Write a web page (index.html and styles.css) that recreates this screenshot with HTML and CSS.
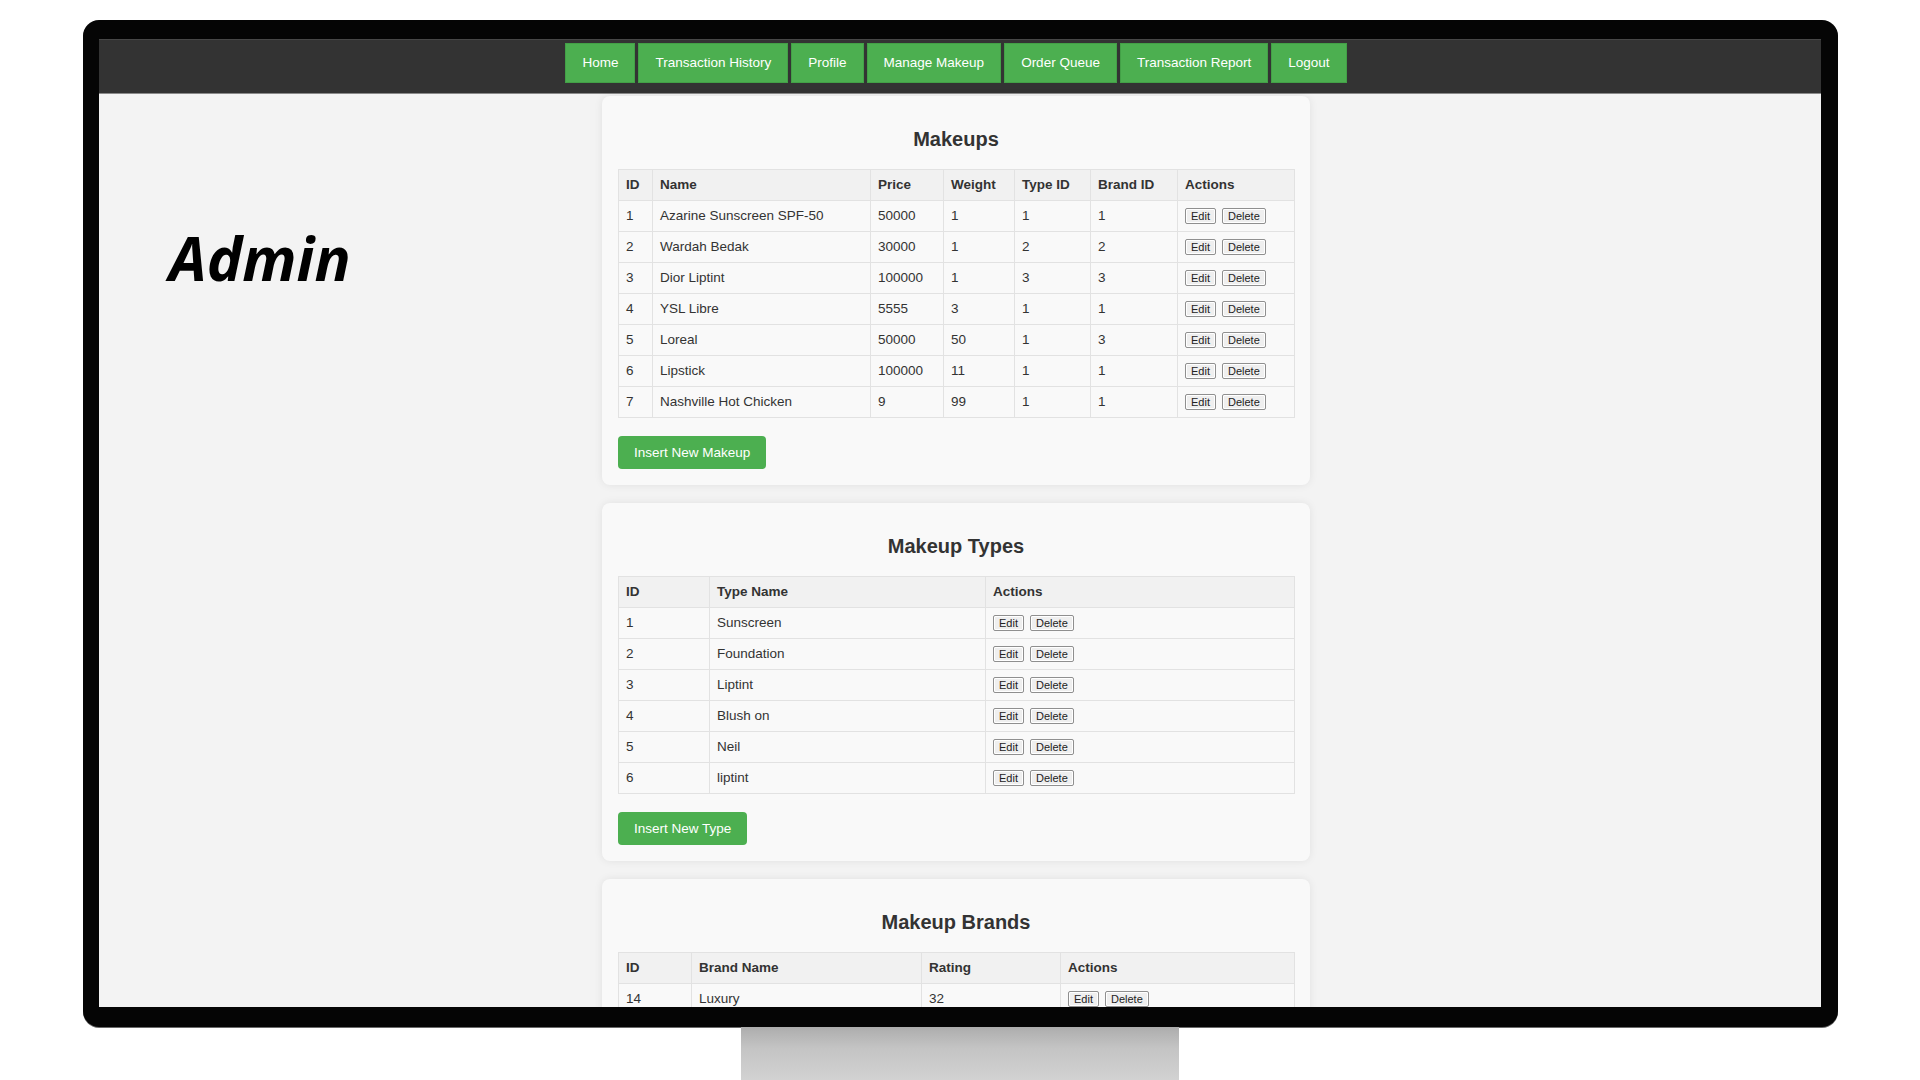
FILE: index.html
```html
<!DOCTYPE html>
<html>
<head>
<meta charset="utf-8">
<link rel="stylesheet" href="styles.css">
</head>
<body>
<div class="monitor">
  <div class="screen">
    <nav class="nav">
      <a class="nav-btn">Home</a>
      <a class="nav-btn">Transaction History</a>
      <a class="nav-btn">Profile</a>
      <a class="nav-btn">Manage Makeup</a>
      <a class="nav-btn">Order Queue</a>
      <a class="nav-btn">Transaction Report</a>
      <a class="nav-btn">Logout</a>
    </nav>
    <main class="main">
      <section class="card">
        <h2 class="card-title">Makeups</h2>
        <table class="tbl">
          <colgroup><col class="m1"><col class="m2"><col class="m3"><col class="m4"><col class="m5"><col class="m6"><col class="m7"></colgroup>
          <thead><tr><th>ID</th><th>Name</th><th>Price</th><th>Weight</th><th>Type ID</th><th>Brand ID</th><th>Actions</th></tr></thead>
          <tbody>
            <tr><td>1</td><td>Azarine Sunscreen SPF-50</td><td>50000</td><td>1</td><td>1</td><td>1</td><td><button class="sm">Edit</button><button class="sm">Delete</button></td></tr>
            <tr><td>2</td><td>Wardah Bedak</td><td>30000</td><td>1</td><td>2</td><td>2</td><td><button class="sm">Edit</button><button class="sm">Delete</button></td></tr>
            <tr><td>3</td><td>Dior Liptint</td><td>100000</td><td>1</td><td>3</td><td>3</td><td><button class="sm">Edit</button><button class="sm">Delete</button></td></tr>
            <tr><td>4</td><td>YSL Libre</td><td>5555</td><td>3</td><td>1</td><td>1</td><td><button class="sm">Edit</button><button class="sm">Delete</button></td></tr>
            <tr><td>5</td><td>Loreal</td><td>50000</td><td>50</td><td>1</td><td>3</td><td><button class="sm">Edit</button><button class="sm">Delete</button></td></tr>
            <tr><td>6</td><td>Lipstick</td><td>100000</td><td>11</td><td>1</td><td>1</td><td><button class="sm">Edit</button><button class="sm">Delete</button></td></tr>
            <tr><td>7</td><td>Nashville Hot Chicken</td><td>9</td><td>99</td><td>1</td><td>1</td><td><button class="sm">Edit</button><button class="sm">Delete</button></td></tr>
          </tbody>
        </table>
        <button class="green-btn">Insert New Makeup</button>
      </section>

      <section class="card">
        <h2 class="card-title">Makeup Types</h2>
        <table class="tbl">
          <colgroup><col class="t1"><col class="t2"><col class="t3"></colgroup>
          <thead><tr><th>ID</th><th>Type Name</th><th>Actions</th></tr></thead>
          <tbody>
            <tr><td>1</td><td>Sunscreen</td><td><button class="sm">Edit</button><button class="sm">Delete</button></td></tr>
            <tr><td>2</td><td>Foundation</td><td><button class="sm">Edit</button><button class="sm">Delete</button></td></tr>
            <tr><td>3</td><td>Liptint</td><td><button class="sm">Edit</button><button class="sm">Delete</button></td></tr>
            <tr><td>4</td><td>Blush on</td><td><button class="sm">Edit</button><button class="sm">Delete</button></td></tr>
            <tr><td>5</td><td>Neil</td><td><button class="sm">Edit</button><button class="sm">Delete</button></td></tr>
            <tr><td>6</td><td>liptint</td><td><button class="sm">Edit</button><button class="sm">Delete</button></td></tr>
          </tbody>
        </table>
        <button class="green-btn">Insert New Type</button>
      </section>

      <section class="card">
        <h2 class="card-title">Makeup Brands</h2>
        <table class="tbl">
          <colgroup><col class="b1"><col class="b2"><col class="b3"><col class="b4"></colgroup>
          <thead><tr><th>ID</th><th>Brand Name</th><th>Rating</th><th>Actions</th></tr></thead>
          <tbody>
            <tr><td>14</td><td>Luxury</td><td>32</td><td><button class="sm">Edit</button><button class="sm">Delete</button></td></tr>
            <tr><td>15</td><td>Wardah</td><td>40</td><td><button class="sm">Edit</button><button class="sm">Delete</button></td></tr>
          </tbody>
        </table>
      </section>
    </main>
    <div class="admin-label">Admin</div>
  </div>
</div>
<div class="stand"></div>
</body>
</html>
```

FILE: styles.css
```css
* { box-sizing: border-box; }
html, body { margin: 0; padding: 0; background: #ffffff; }
body { width: 1920px; height: 1080px; overflow: hidden; font-family: "Liberation Sans", Arial, sans-serif; }

.monitor {
  margin: 20px 0 0 83px;
  width: 1755px;
  height: 1007px;
  padding: 19px 17px 20px 16px;
  background: #050505;
  border-radius: 16px;
  box-shadow: 0 1px 0 #6a6a6a;
}
.screen {
  position: relative;
  width: 1722px;
  height: 968px;
  overflow: hidden;
  background: #f3f3f3;
}

.nav {
  height: 55px;
  background: #333333;
  border-top: 1px solid #474747;
  border-bottom: 1px solid #8a8a8a;
  padding: 3px 8px 0 0;
  display: flex;
  justify-content: center;
  align-items: flex-start;
  gap: 3px;
}
.nav-btn {
  display: block;
  height: 40px;
  line-height: 38px;
  padding: 0 16px;
  background: #4caf50;
  border: 1px solid #43a047;
  color: #ffffff;
  font-size: 13.5px;
  text-decoration: none;
}

.main {
  padding: 2px 8px 0 0;
  display: flex;
  flex-direction: column;
  align-items: center;
  gap: 18px;
}
.card {
  width: 708px;
  background: #f9f9f9;
  border-radius: 8px;
  box-shadow: 0 0 8px rgba(0,0,0,0.08);
  padding: 16px 16px 16px;
}
.card-title {
  margin: 16px 0 18px;
  text-align: center;
  font-size: 20px;
  line-height: 23px;
  font-weight: bold;
  color: #333333;
}

.tbl {
  width: 100%;
  border-collapse: collapse;
  table-layout: fixed;
  color: #333333;
  font-size: 13.5px;
}
.tbl th, .tbl td {
  border: 1px solid #e2e2e2;
  padding: 7px 7px 7px 7px;
  line-height: 16px;
  text-align: left;
  white-space: nowrap;
  vertical-align: middle;
}
.tbl th { background: #f1f1f1; font-weight: bold; }
.tbl td { background: #f9f9f9; }

.m1 { width: 34px; } .m2 { width: 218px; } .m3 { width: 73px; } .m4 { width: 71px; }
.m5 { width: 76px; } .m6 { width: 87px; } .m7 { width: 117px; }
.t1 { width: 91px; } .t2 { width: 276px; } .t3 { width: 309px; }
.b1 { width: 73px; } .b2 { width: 230px; } .b3 { width: 139px; } .b4 { width: 234px; }

.sm {
  display: inline-block;
  vertical-align: middle;
  height: 16px;
  margin: -2px 6px -2px 0;
  padding: 0 5px;
  font-family: "Liberation Sans", Arial, sans-serif;
  font-size: 11px;
  line-height: 14px;
  color: #222222;
  background: #efefef;
  border: 1px solid #8f8f8f;
  border-radius: 2px;
  box-shadow: inset 0 0 0 1px #ffffff;
}

.green-btn {
  display: block;
  margin-top: 18px;
  height: 33px;
  padding: 0 16px;
  background: #4caf50;
  color: #ffffff;
  border: none;
  border-radius: 4px;
  font-family: "Liberation Sans", Arial, sans-serif;
  font-size: 13.5px;
}

.admin-label {
  position: absolute;
  left: 70px;
  top: 179px;
  font-family: "Open Sans", sans-serif;
  font-weight: bold;
  font-style: italic;
  font-size: 60px;
  line-height: 80px;
  color: #000000;
}

.stand {
  margin-left: 741px;
  width: 438px;
  height: 53px;
  background: linear-gradient(to bottom, #adadad 0%, #c4c4c4 40%, #d2d2d2 100%);
}
```
